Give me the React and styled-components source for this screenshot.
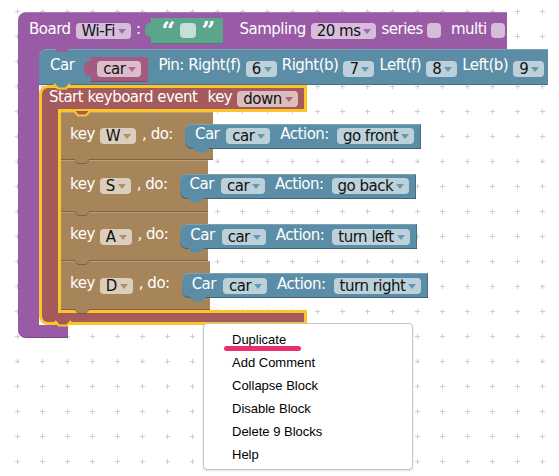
import React from 'react';
import styled, { createGlobalStyle } from 'styled-components';

const C = {
  purple: '#995ba5',
  blue: '#5b8da6',
  event: '#a55b5b',
  key: '#a6855b',
  rose: '#a55b80',
  green: '#5ba58c',
  glow: '#fbc52a',
};

const GlobalStyle = createGlobalStyle`
  html, body { margin: 0; padding: 0; background: #fff; }
  #root { width: 559px; height: 476px; }
`;

const Workspace = styled.div`
  position: relative;
  width: 559px;
  height: 476px;
  overflow: hidden;
  box-sizing: border-box;
  padding: 12px 0 0 18px;
  background: #fff;
  font-family: "DejaVu Sans", "Noto Sans", sans-serif;
`;

const GridSvg = styled.svg`
  position: absolute;
  left: 0;
  top: 0;
`;

function GridBackground() {
  return (
    <GridSvg width="559" height="476">
      <defs>
        <pattern id="plusGrid" width="25" height="25" patternUnits="userSpaceOnUse">
          <rect x="15" y="11" width="5" height="1" fill="#cfcfcf" />
          <rect x="17" y="9" width="1" height="5" fill="#cfcfcf" />
        </pattern>
      </defs>
      <rect width="559" height="476" fill="url(#plusGrid)" />
    </GridSvg>
  );
}

/* ---------- shared field parts ---------- */

const Label = styled.span`
  flex: none;
  margin-left: ${p => p.$ml ?? 5}px;
  padding-bottom: ${p => p.$lift ?? 4}px;
  color: #fff;
  font-size: 15px;
  line-height: 16px;
  letter-spacing: -0.5px;
  white-space: nowrap;
`;

const Dropdown = styled.span`
  flex: none;
  display: inline-flex;
  align-items: center;
  gap: 3px;
  margin-left: ${p => p.$ml ?? 5}px;
  height: 16px;
  box-sizing: border-box;
  padding: 0 5px 0 6px;
  border-radius: 4px;
  background: rgba(255, 255, 255, 0.6);
  color: #111;
  font-size: 15px;
  line-height: 12px;
  letter-spacing: -0.5px;
  white-space: nowrap;
`;

const Arrow = styled.span`
  width: 0;
  height: 0;
  margin-top: 1px;
  border-left: 4px solid transparent;
  border-right: 4px solid transparent;
  border-top: 5px solid ${p => p.$color};
  opacity: 0.85;
`;

function Drop({ children, color, ml }) {
  return (
    <Dropdown $ml={ml}>
      {children}
      <Arrow $color={color} />
    </Dropdown>
  );
}

const Checkbox = styled.span`
  flex: none;
  margin-left: ${p => p.$ml ?? 5}px;
  width: 14px;
  height: 15px;
  border-radius: 4px;
  background: rgba(255, 255, 255, 0.6);
`;

/* connector tabs between stacked blocks */
const TabSvg = styled.svg`
  position: absolute;
  left: ${p => p.$x}px;
  top: ${p => (p.$bottom ? '100%' : '0')};
  margin-top: ${p => p.$dy ?? 0}px;
  z-index: 3;
  overflow: visible;
`;

function Connector({ x, fill, stroke, bottom, dy, strokeWidth = 2 }) {
  return (
    <TabSvg $x={x} $bottom={bottom} $dy={dy} width="16" height="5" viewBox="0 0 16 5">
      <path
        d="M0 0 L4 4.5 L12 4.5 L16 0"
        fill={fill}
        stroke={stroke || 'none'}
        strokeWidth={stroke ? strokeWidth : 0}
        strokeLinejoin="round"
      />
    </TabSvg>
  );
}

/* ---------- Board (purple) ---------- */

const Board = styled.div`
  position: relative;
  z-index: 1;
  display: flex;
  flex-direction: column;
  align-items: flex-start;
`;

const BoardHead = styled.div`
  display: flex;
  align-items: center;
  width: 489px;
  height: 37px;
  box-sizing: border-box;
  padding-left: 11px;
  background: ${C.purple};
  border-radius: 8px 0 0 0;
  box-shadow: inset 0 1px 0 rgba(255, 255, 255, 0.2);
`;

const BoardBody = styled.div`
  display: flex;
  align-items: stretch;
`;

const BoardSpine = styled.div`
  flex: none;
  width: 21px;
  background: ${C.purple};
`;

const BoardStack = styled.div`
  display: flex;
  flex-direction: column;
  align-items: flex-start;
  background: linear-gradient(${C.purple}, ${C.purple}) 0 0 / 10px 10px no-repeat;
`;

const BoardFoot = styled.div`
  width: 50px;
  height: 13px;
  background: ${C.purple};
  border-radius: 0 0 0 8px;
  box-shadow: inset 0 -1px 0 rgba(0, 0, 0, 0.2);
`;

/* green text value block */
const TextBlock = styled.div`
  position: relative;
  flex: none;
  display: flex;
  align-items: center;
  margin-left: ${p => p.$ml ?? 5}px;
  width: 72px;
  height: 26px;
  box-sizing: border-box;
  padding-left: 10px;
  background: ${C.green};
  box-shadow: inset 0 -1px 0 rgba(0, 0, 0, 0.2);

  &::before {
    content: '';
    position: absolute;
    left: -6px;
    top: 5px;
    width: 7px;
    height: 14px;
    background: ${C.green};
    border-radius: 5px 0 0 5px;
  }
`;

const Quote = styled.span`
  width: 12px;
  height: 20px;
  margin-left: ${p => p.$ml ?? 0}px;
  color: #fff;
  font-family: "DejaVu Serif", serif;
  font-weight: bold;
  font-size: 24px;
  line-height: 20px;
  text-align: center;
  overflow: visible;
`;

const TextField = styled.span`
  width: 16px;
  height: 15px;
  margin-left: 7px;
  border-radius: 4px;
  background: rgba(255, 255, 255, 0.65);
`;

/* ---------- Car statement (blue) ---------- */

const CarRow = styled.div`
  position: relative;
  display: flex;
  align-items: center;
  width: 509px;
  height: 36px;
  box-sizing: border-box;
  padding: 4px 0 0 11px;
  background: ${C.blue};
  border-radius: 8px 0 0 0;
  box-shadow: inset 0 1px 0 rgba(255, 255, 255, 0.2), inset 0 -1px 0 rgba(0, 0, 0, 0.2);
`;

const VarBlock = styled.div`
  position: relative;
  flex: none;
  display: flex;
  align-items: center;
  margin-left: ${p => p.$ml ?? 5}px;
  height: 25px;
  padding: 0 7px 0 1px;
  background: ${C.rose};
  box-shadow: inset 0 -1px 0 rgba(0, 0, 0, 0.2);

  &::before {
    content: '';
    position: absolute;
    left: -7px;
    top: 4px;
    width: 8px;
    height: 15px;
    background: ${C.rose};
    border-radius: 5px 0 0 5px;
  }
`;

/* ---------- Keyboard event (selected, yellow outline) ---------- */

const EventBlock = styled.div`
  position: relative;
  display: flex;
  flex-direction: column;
  align-items: flex-start;
`;

const EventHead = styled.div`
  position: relative;
  display: flex;
  align-items: center;
  width: 268px;
  height: 27px;
  box-sizing: border-box;
  padding: 0 0 3px 7px;
  background: ${C.event};
  border: 3px solid ${C.glow};
  border-bottom: none;
  border-radius: 9px 0 0 0;

  &::after {
    content: '';
    position: absolute;
    left: 16px;
    right: -3px;
    bottom: 0;
    height: 3px;
    background: ${C.glow};
  }
`;

const EventBody = styled.div`
  display: flex;
  align-items: stretch;
`;

const EventSpine = styled.div`
  flex: none;
  width: 16px;
  background: ${C.event};
  border-left: 3px solid ${C.glow};
`;

const KeyStack = styled.div`
  display: flex;
  flex-direction: column;
  align-items: flex-start;
  border-left: 3px solid ${C.glow};
`;

const EventFoot = styled.div`
  position: relative;
  width: 268px;
  height: 15px;
  box-sizing: border-box;
  background: ${C.event};
  border: 3px solid ${C.glow};
  border-top: none;
  border-radius: 0 0 0 9px;

  &::before {
    content: '';
    position: absolute;
    left: 16px;
    right: -3px;
    top: 0;
    height: 3px;
    background: ${C.glow};
  }
`;

const KeyBlock = styled.div`
  position: relative;
  display: flex;
  align-items: center;
  height: ${p => p.$h}px;
  box-sizing: border-box;
  padding-left: 9px;
  background: ${C.key};
  box-shadow: inset 0 1px 0 rgba(255, 255, 255, 0.22), inset 0 -1px 0 rgba(0, 0, 0, 0.25);
`;

const Slot = styled.div`
  flex: none;
  display: flex;
  align-items: center;
  width: 28px;
  margin-left: 12px;
  overflow: visible;
`;

const ActionBlock = styled.div`
  position: relative;
  flex: none;
  display: flex;
  align-items: center;
  height: 25px;
  box-sizing: border-box;
  padding: 0 7px 0 10px;
  background: ${C.blue};
  border-radius: 7px 0 0 7px;
  box-shadow: inset 0 1px 0 rgba(255, 255, 255, 0.2), inset 0 -1px 0 rgba(0, 0, 0, 0.3),
    inset -1px 0 0 rgba(0, 0, 0, 0.2);
`;

/* ---------- Context menu ---------- */

const Menu = styled.div`
  position: absolute;
  left: 203px;
  top: 323px;
  z-index: 10;
  width: 210px;
  box-sizing: border-box;
  padding: 4px 0 3px;
  background: #fff;
  border: 1px solid #c4c4c4;
  border-radius: 4px;
  box-shadow: 0 1px 2px rgba(0, 0, 0, 0.12);
  font-family: "Liberation Sans", Arial, sans-serif;
  font-size: 13px;
  color: #000;
`;

const MenuItem = styled.div`
  position: relative;
  height: 23px;
  line-height: 23px;
  padding-left: 28px;
  white-space: nowrap;
`;

const Highlight = styled.span`
  position: absolute;
  left: 20px;
  top: 18px;
  width: 77px;
  height: 5px;
  border-radius: 3px;
  background: #ea2d6c;
`;

const keys = [
  { k: 'W', action: 'go front', h: 48 },
  { k: 'S', action: 'go back', h: 52 },
  { k: 'A', action: 'turn left', h: 49 },
  { k: 'D', action: 'turn right', h: 49 },
];

const menuItems = ['Duplicate', 'Add Comment', 'Collapse Block', 'Disable Block', 'Delete 9 Blocks', 'Help'];

export default function App() {
  return (
    <>
      <GlobalStyle />
      <Workspace>
        <GridBackground />
        <Board>
          <BoardHead>
            <Label $ml={0} $lift={3}>Board</Label>
            <Drop color={C.purple}>Wi-Fi</Drop>
            <Label $lift={3}>:</Label>
            <TextBlock $ml={11}>
              <Quote>“</Quote>
              <TextField />
              <Quote $ml={5}>”</Quote>
            </TextBlock>
            <Label $ml={16} $lift={3}>Sampling</Label>
            <Drop color={C.purple}>20 ms</Drop>
            <Label $lift={3}>series</Label>
            <Checkbox $ml={4} />
            <Label $ml={10} $lift={3}>multi</Label>
            <Checkbox $ml={4} />
          </BoardHead>
          <BoardBody>
            <BoardSpine />
            <BoardStack>
              <CarRow>
                <Connector x={15} fill={C.purple} dy={-1} />
                <Label $ml={0} $lift={8}>Car</Label>
                <VarBlock $ml={17}>
                  <Drop color={C.rose}>car</Drop>
                </VarBlock>
                <Label $ml={10} $lift={8}>Pin: Right(f)</Label>
                <Drop color={C.blue}>6</Drop>
                <Label $lift={8}>Right(b)</Label>
                <Drop color={C.blue}>7</Drop>
                <Label $lift={8}>Left(f)</Label>
                <Drop color={C.blue}>8</Drop>
                <Label $lift={8}>Left(b)</Label>
                <Drop color={C.blue}>9</Drop>
                <Connector x={15} fill={C.blue} stroke={C.glow} bottom dy={-1} />
              </CarRow>
              <EventBlock>
                <EventHead>
                  <Label $ml={0} $lift={3}>Start keyboard event</Label>
                  <Label $ml={10} $lift={3}>key</Label>
                  <Drop color={C.event}>down</Drop>
                </EventHead>
                <EventBody>
                  <EventSpine />
                  <KeyStack>
                    {keys.map((item, i) => (
                      <KeyBlock key={item.k} $h={item.h}>
                        {i === 0 && <Connector x={13} fill={C.event} stroke={C.glow} dy={-1} />}
                        <Label $ml={0} $lift={5}>key</Label>
                        <Drop color={C.key}>{item.k}</Drop>
                        <Label $ml={6} $lift={5}>, do:</Label>
                        <Slot>
                          <ActionBlock>
                            <Label $ml={0} $lift={4}>Car</Label>
                            <Drop color={C.blue} ml={7}>car</Drop>
                            <Label $ml={10} $lift={4}>Action:</Label>
                            <Drop color={C.blue} ml={8}>{item.action}</Drop>
                            <Connector x={8} fill={C.blue} bottom dy={-1} />
                          </ActionBlock>
                        </Slot>
                        <Connector x={13} fill={C.key} stroke="rgba(0,0,0,0.25)" strokeWidth={1} bottom dy={-1} />
                      </KeyBlock>
                    ))}
                  </KeyStack>
                </EventBody>
                <EventFoot>
                  <Connector x={13} fill={C.event} stroke={C.glow} bottom dy={-1} />
                </EventFoot>
              </EventBlock>
            </BoardStack>
          </BoardBody>
          <BoardFoot />
        </Board>
        <Menu>
          {menuItems.map((m, i) => (
            <MenuItem key={m}>
              {m}
              {i === 0 && <Highlight />}
            </MenuItem>
          ))}
        </Menu>
      </Workspace>
    </>
  );
}
